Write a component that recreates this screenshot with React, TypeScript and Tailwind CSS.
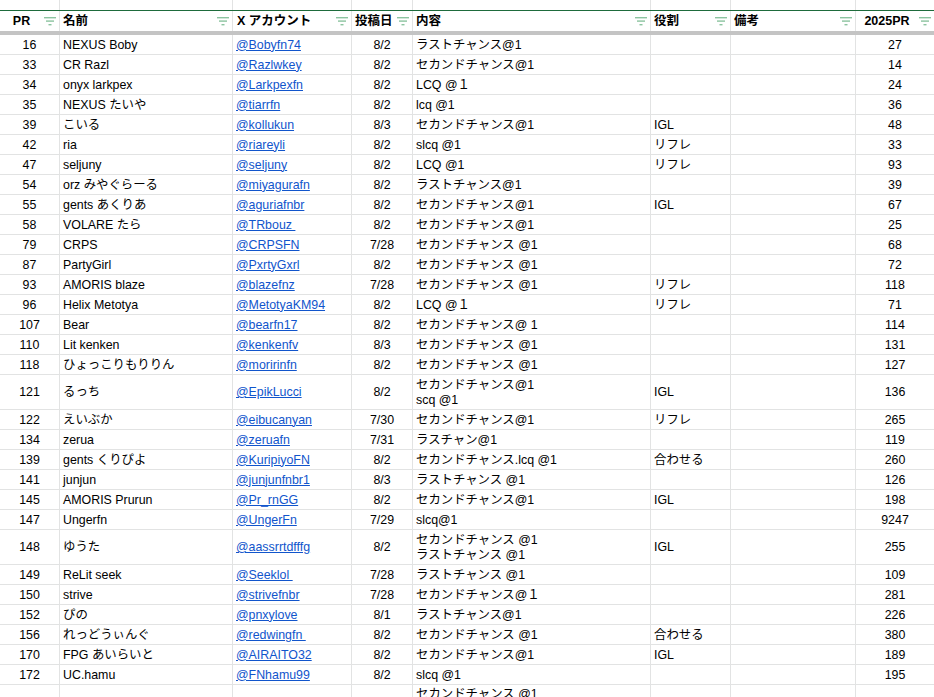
const gridCols = "grid grid-cols-[60px_173px_119px_61px_238px_80px_125px_79px]";
const fontStack = "font-['Liberation_Sans','Noto_Sans_CJK_JP',sans-serif]";

type Row = {
  pr: string;
  name: string;
  x: string;
  date: string;
  note: string[];
  role?: string;
  pr2025?: string;
};

const rows: Row[] = [
  { pr: "16", name: "NEXUS Boby", x: "@Bobyfn74", date: "8/2", note: ["ラストチャンス@1"], pr2025: "27" },
  { pr: "33", name: "CR Razl", x: "@Razlwkey", date: "8/2", note: ["セカンドチャンス@1"], pr2025: "14" },
  { pr: "34", name: "onyx larkpex", x: "@Larkpexfn", date: "8/2", note: ["LCQ @１"], pr2025: "24" },
  { pr: "35", name: "NEXUS たいや", x: "@tiarrfn", date: "8/2", note: ["lcq @1"], pr2025: "36" },
  { pr: "39", name: "こいる", x: "@kollukun", date: "8/3", note: ["セカンドチャンス@1"], role: "IGL", pr2025: "48" },
  { pr: "42", name: "ria", x: "@riareyli", date: "8/2", note: ["slcq @1"], role: "リフレ", pr2025: "33" },
  { pr: "47", name: "seljuny", x: "@seljuny", date: "8/2", note: ["LCQ @1"], role: "リフレ", pr2025: "93" },
  { pr: "54", name: "orz みやぐらーる", x: "@miyagurafn", date: "8/2", note: ["ラストチャンス@1"], pr2025: "39" },
  { pr: "55", name: "gents あくりあ", x: "@aguriafnbr", date: "8/2", note: ["セカンドチャンス@1"], role: "IGL", pr2025: "67" },
  { pr: "58", name: "VOLARE たら", x: "@TRbouz ", date: "8/2", note: ["セカンドチャンス@1"], pr2025: "25" },
  { pr: "79", name: "CRPS", x: "@CRPSFN", date: "7/28", note: ["セカンドチャンス @1"], pr2025: "68" },
  { pr: "87", name: "PartyGirl", x: "@PxrtyGxrl", date: "8/2", note: ["セカンドチャンス @1"], pr2025: "72" },
  { pr: "93", name: "AMORIS blaze", x: "@blazefnz", date: "7/28", note: ["セカンドチャンス @1"], role: "リフレ", pr2025: "118" },
  { pr: "96", name: "Helix Metotya", x: "@MetotyaKM94", date: "8/2", note: ["LCQ @１"], role: "リフレ", pr2025: "71" },
  { pr: "107", name: "Bear", x: "@bearfn17", date: "8/2", note: ["セカンドチャンス@ 1"], pr2025: "114" },
  { pr: "110", name: "Lit kenken", x: "@kenkenfv", date: "8/3", note: ["セカンドチャンス @1"], pr2025: "131" },
  { pr: "118", name: "ひょっこりもりりん", x: "@moririnfn", date: "8/2", note: ["セカンドチャンス @1"], pr2025: "127" },
  { pr: "121", name: "るっち", x: "@EpikLucci", date: "8/2", note: ["セカンドチャンス@1", "scq @1"], role: "IGL", pr2025: "136" },
  { pr: "122", name: "えいぶか", x: "@eibucanyan", date: "7/30", note: ["セカンドチャンス@1"], role: "リフレ", pr2025: "265" },
  { pr: "134", name: "zerua", x: "@zeruafn", date: "7/31", note: ["ラスチャン@1"], pr2025: "119" },
  { pr: "139", name: "gents くりぴよ", x: "@KuripiyoFN", date: "8/2", note: ["セカンドチャンス.lcq @1"], role: "合わせる", pr2025: "260" },
  { pr: "141", name: "junjun", x: "@junjunfnbr1", date: "8/3", note: ["ラストチャンス @1"], pr2025: "126" },
  { pr: "145", name: "AMORIS Prurun", x: "@Pr_rnGG", date: "8/2", note: ["セカンドチャンス@1"], role: "IGL", pr2025: "198" },
  { pr: "147", name: "Ungerfn", x: "@UngerFn", date: "7/29", note: ["slcq@1"], pr2025: "9247" },
  { pr: "148", name: "ゆうた", x: "@aassrrtdfffg", date: "8/2", note: ["セカンドチャンス @1", "ラストチャンス @1"], role: "IGL", pr2025: "255" },
  { pr: "149", name: "ReLit seek", x: "@Seeklol ", date: "7/28", note: ["ラストチャンス @1"], pr2025: "109" },
  { pr: "150", name: "strive", x: "@strivefnbr", date: "7/28", note: ["セカンドチャンス@１"], pr2025: "281" },
  { pr: "152", name: "ぴの", x: "@pnxylove", date: "8/1", note: ["ラストチャンス@1"], pr2025: "226" },
  { pr: "156", name: "れっどうぃんぐ", x: "@redwingfn ", date: "8/2", note: ["セカンドチャンス @1"], role: "合わせる", pr2025: "380" },
  { pr: "170", name: "FPG あいらいと", x: "@AIRAITO32", date: "8/2", note: ["セカンドチャンス@1"], role: "IGL", pr2025: "189" },
  { pr: "172", name: "UC.hamu", x: "@FNhamu99", date: "8/2", note: ["slcq @1"], pr2025: "195" },
];

const FilterIcon = () => (
  <svg width="12" height="9" viewBox="0 0 12 9" className="shrink-0">
    <rect x="0" y="0" width="12" height="1.4" fill="#8cc4a0" />
    <rect x="2" y="3.4" width="8" height="1.4" fill="#8cc4a0" />
    <rect x="4.5" y="7" width="3" height="1.4" fill="#8cc4a0" />
  </svg>
);

const HeaderCell = ({ label, center }: { label: string; center?: boolean }) => (
  <div className="flex items-center border-r border-[#e2e3e3] pl-[3px] pr-[3px] h-5">
    <span
      className={`flex-1 font-bold text-[12.5px] text-black whitespace-nowrap ${
        center ? "text-center pr-[4px]" : ""
      }`}
    >
      {label}
    </span>
    <FilterIcon />
  </div>
);

const Cell = ({ children, center }: { children?: React.ReactNode; center?: boolean }) => (
  <div
    className={`flex items-center border-r border-b border-[#e2e3e3] px-[3px] pt-px overflow-hidden whitespace-nowrap ${
      center ? "justify-center" : ""
    }`}
  >
    {children}
  </div>
);

const App = () => {
  return (
    <div className={`h-screen w-[934px] overflow-hidden bg-white text-[12.4px] leading-[15px] text-black ${fontStack}`}>
      {/* frozen strip above the header */}
      <div className={`${gridCols} h-[10px]`}>
        {Array.from({ length: 8 }).map((_, i) => (
          <div key={i} className="border-r border-[#e2e3e3]" />
        ))}
      </div>

      <div className={`${gridCols} border-t border-[#1e6b3c]`}>
        <HeaderCell label="PR" center />
        <HeaderCell label="名前" />
        <div className="flex items-center border-r border-[#e2e3e3] pl-[4px] pr-[3px] h-5">
          <span className="flex-1 font-bold text-[12.5px] text-black whitespace-nowrap">X アカウント</span>
          <FilterIcon />
        </div>
        <HeaderCell label="投稿日" />
        <HeaderCell label="内容" />
        <HeaderCell label="役割" />
        <HeaderCell label="備考" />
        <HeaderCell label="2025PR" center />
      </div>

      <div className="h-1 bg-[#c4c4c4]" />

      {rows.map((row) => (
        <div
          key={row.pr}
          className={`${gridCols} ${row.note.length > 1 ? "h-[35px]" : "h-5"}`}
        >
          <Cell center>{row.pr}</Cell>
          <Cell>{row.name}</Cell>
          <Cell>
            <span className="text-[#1155cc] underline whitespace-pre">{row.x}</span>
          </Cell>
          <Cell center>{row.date}</Cell>
          <Cell>
            <div>
              {row.note.map((line) => (
                <div key={line}>{line}</div>
              ))}
            </div>
          </Cell>
          <Cell>{row.role}</Cell>
          <Cell />
          <Cell center>{row.pr2025}</Cell>
        </div>
      ))}

      {/* last row runs off the bottom of the window */}
      <div className={`${gridCols} h-[13px]`}>
        <div className="border-r border-[#e2e3e3]" />
        <div className="border-r border-[#e2e3e3]" />
        <div className="border-r border-[#e2e3e3]" />
        <div className="border-r border-[#e2e3e3]" />
        <div className="border-r border-[#e2e3e3] px-[3px] pt-[2px] whitespace-nowrap">セカンドチャンス @1</div>
        <div className="border-r border-[#e2e3e3]" />
        <div className="border-r border-[#e2e3e3]" />
        <div className="border-r border-[#e2e3e3]" />
      </div>
    </div>
  );
};

export default App;
